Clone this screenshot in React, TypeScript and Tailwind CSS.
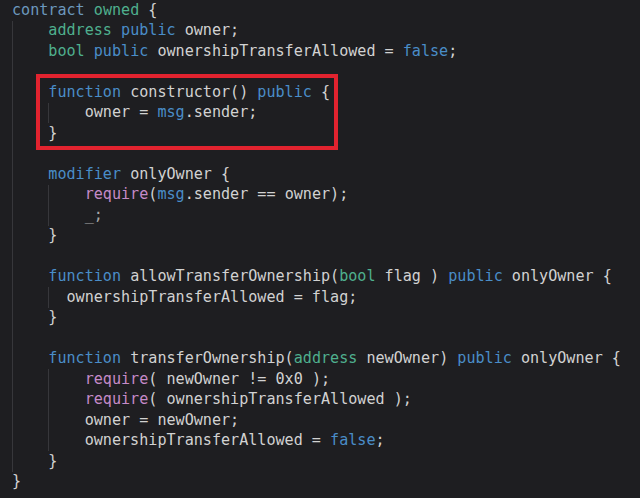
type Tok = [string, string]

const C = {
  t: "text-[#d2d2d2]",
  ctr: "text-[#6c98bd]",
  typ: "text-[#4fb08e]",
  kw: "text-[#4a8dc8]",
  fn: "text-[#c58ac8]",
  dim: "text-[#a8a8a8]",
}

const t = (s: string): Tok => [C.t, s]
const kw = (s: string): Tok => [C.kw, s]
const ty = (s: string): Tok => [C.typ, s]
const fn = (s: string): Tok => [C.fn, s]

// g = indent guides (each 4 columns wide), short = last guide only 2 columns
const lines: { g: number; short?: boolean; toks: Tok[] }[] = [
  { g: 0, toks: [[C.ctr, "contract "], ty("owned"), t(" {")] },
  { g: 1, toks: [ty("address "), kw("public"), t(" owner;")] },
  { g: 1, toks: [ty("bool "), kw("public"), t(" ownershipTransferAllowed = "), kw("false"), t(";")] },
  { g: 1, toks: [] },
  { g: 1, toks: [kw("function"), t(" constructor() "), kw("public"), t(" {")] },
  { g: 2, toks: [t("owner = "), kw("msg"), t(".sender;")] },
  { g: 1, toks: [t("}")] },
  { g: 1, toks: [] },
  { g: 1, toks: [kw("modifier"), t(" onlyOwner {")] },
  { g: 2, toks: [fn("require"), t("("), kw("msg"), t(".sender == owner);")] },
  { g: 2, toks: [[C.dim, "_;"]] },
  { g: 1, toks: [t("}")] },
  { g: 1, toks: [] },
  { g: 1, toks: [kw("function"), t(" allowTransferOwnership("), ty("bool"), t(" flag ) "), kw("public"), t(" onlyOwner {")] },
  { g: 2, short: true, toks: [t("ownershipTransferAllowed = flag;")] },
  { g: 1, toks: [t("}")] },
  { g: 1, toks: [] },
  { g: 1, toks: [kw("function"), t(" transferOwnership("), ty("address"), t(" newOwner) "), kw("public"), t(" onlyOwner {")] },
  { g: 2, toks: [fn("require"), t("( newOwner != 0x0 );")] },
  { g: 2, toks: [fn("require"), t("( ownershipTransferAllowed );")] },
  { g: 2, toks: [t("owner = newOwner;")] },
  { g: 2, toks: [t("ownershipTransferAllowed = "), kw("false"), t(";")] },
  { g: 1, toks: [t("}")] },
  { g: 0, toks: [t("}")] },
]

export default function App() {
  return (
    <div className="relative w-[640px] h-[498px] overflow-hidden bg-[#1e1e21] font-['DejaVu_Sans_Mono',monospace] text-[15.1px]">
      <div className="flex flex-col pl-[12px]">
        {lines.map((ln, i) => (
          <div key={i} className="flex h-[20.5px] items-center whitespace-pre">
            {Array.from({ length: ln.g }).map((_, j) => (
              <span
                key={j}
                className={
                  ln.short && j === ln.g - 1
                    ? "w-[2ch] shrink-0 self-stretch border-l border-[#37373b]"
                    : "w-[4ch] shrink-0 self-stretch border-l border-[#37373b]"
                }
              />
            ))}
            {ln.toks.map(([cls, s], k) => (
              <span key={k} className={cls}>
                {s}
              </span>
            ))}
          </div>
        ))}
      </div>

      {/* highlight box */}
      <div className="absolute left-[36px] top-[74px] w-[302px] h-[76px] border-4 border-[#e2232f]" />
    </div>
  )
}
